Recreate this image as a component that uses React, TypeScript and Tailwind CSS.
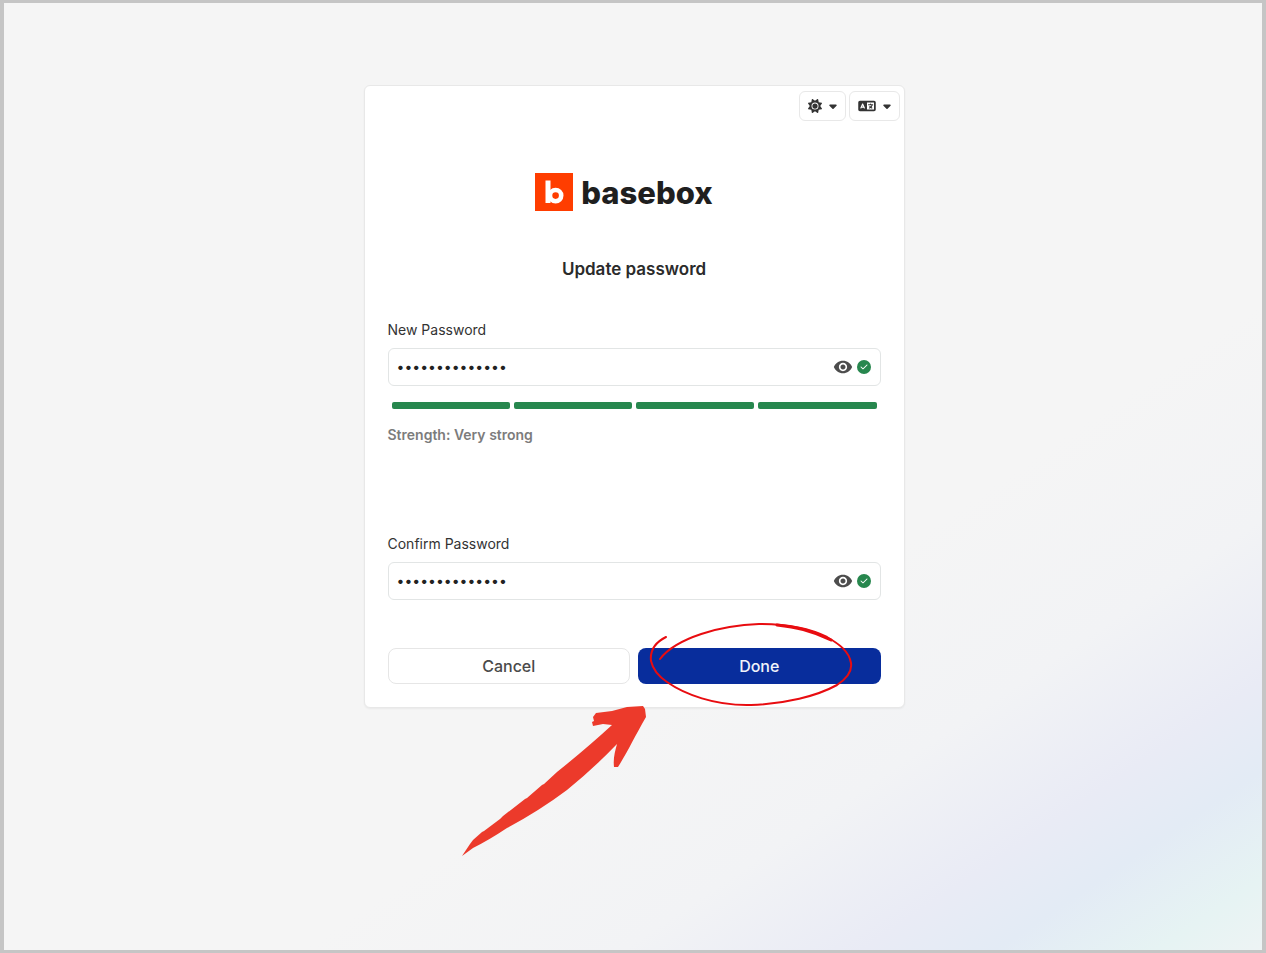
import { useState } from 'react';
import { FaCaretDown, FaCheck, FaLanguage, FaSun } from 'react-icons/fa6';
import { MdVisibility } from 'react-icons/md';

interface PasswordFieldProps {
  id: string;
  label: string;
}

function PasswordField({ id, label }: PasswordFieldProps) {
  const [value, setValue] = useState('correcthorse99');
  const [visible, setVisible] = useState(false);

  return (
    <div>
      <label htmlFor={id} className="block text-sm leading-5 text-[#333]">
        {label}
      </label>
      <div className="mt-2 flex h-[38px] items-center gap-1 rounded-md border border-[#e2e5e5] bg-white pl-2 pr-[9px]">
        <input
          id={id}
          type={visible ? 'text' : 'password'}
          value={value}
          onChange={(e) => setValue(e.target.value)}
          className="min-w-0 flex-1 bg-transparent text-sm text-[#222] outline-none"
        />
        <button
          type="button"
          aria-label="Show password"
          onClick={() => setVisible(!visible)}
          className="text-[#4d4d4d]"
        >
          <MdVisibility className="size-5" />
        </button>
        <span className="flex size-3.5 items-center justify-center rounded-full bg-[#27874e] text-white">
          <FaCheck className="size-2" />
        </span>
      </div>
    </div>
  );
}

function StrengthMeter() {
  return (
    <div>
      <div className="mt-4 grid grid-cols-4 gap-1 px-1">
        {[1, 2, 3, 4].map((step) => (
          <span key={step} className="h-[7px] rounded-xs bg-[#27874e]" />
        ))}
      </div>
      <p className="mt-4 text-sm font-semibold leading-5 text-[#7c7c7c]">
        Strength: Very strong
      </p>
    </div>
  );
}

function Logo() {
  return (
    <div className="flex items-center justify-center gap-2 pr-5">
      <svg viewBox="0 0 38 38" className="size-[38px]" aria-hidden="true">
        <rect width="38" height="38" fill="#ff3d00" />
        <rect x="10.5" y="7.5" width="5" height="22.5" fill="#fff" />
        <circle cx="20.6" cy="22.6" r="5.6" fill="none" stroke="#fff" strokeWidth="4.6" />
      </svg>
      <span className="pt-0.5 text-[31px] font-extrabold leading-[38px] text-[#1f1f1f]">
        basebox
      </span>
    </div>
  );
}

// Hand-drawn marks pointing at the Done button
function Annotations() {
  return (
    <svg
      viewBox="0 0 400 240"
      className="pointer-events-none absolute left-[94px] top-[533px] h-60 w-[400px]"
      aria-hidden="true"
    >
      <g fill="none" stroke="#e80c10" strokeWidth="2" strokeLinecap="round">
        <path d="M207 18C195 24 191 33 192 42C194 51 199 57 208 63C225 75 256 87 292 86C326 85 358 77 378 66C389 59 393 51 392 44C390 32 380 25 368 18C350 9 329 5 300 5C262 6 217 19 201 40" />
        <path d="M318 6C336 8 352 11 372 21" strokeWidth="3" />
      </g>
      <path
        d="M3 237L11 225L14 221L23 213L25 212L41 200L44 197L66 180L68 179L83 166L85 165L98 153Q128 129 153 106L144 105L134 107L133 103L135 102L134 98L137 94L153 92L168 88L184 87L186 90L187 98C176 117 168 134 159 148L155 148C154 140 156 132 158 125Q134 150 108 171Q80 192 48 209Q30 221 14 229Z"
        fill="#ec3a2b"
      />
    </svg>
  );
}

export default function App() {
  return (
    <main className="flex min-h-screen items-start justify-center border-x-4 border-y-3 border-[#c5c5c5] bg-[linear-gradient(146deg,#f5f5f5_0%,#f5f5f5_64%,#f2f3f5_76%,#e9ebf5_85%,#e3ebf5_90%,#e6f3f3_96%,#edf3f4_100%)] pb-10 pl-0.5 pt-[82px] font-[Inter,sans-serif]">
      <section className="relative w-full max-w-[541px] rounded-md border border-[#e8e8e8] bg-white pb-[23px] shadow-xs">
        <div className="flex justify-end gap-[3px] px-1 pt-[5px]">
          <button
            type="button"
            aria-label="Theme"
            className="flex h-[30px] w-[47px] items-center justify-center gap-1 rounded-md border border-[#e8e8e8] pl-[3px] text-[#333]"
          >
            <FaSun className="size-3.5" />
            <FaCaretDown className="h-3 w-3.5" />
          </button>
          <button
            type="button"
            aria-label="Language"
            className="flex h-[30px] w-[51px] items-center justify-center gap-1 rounded-md border border-[#e8e8e8] pl-[3px] text-[#333]"
          >
            <FaLanguage className="h-3.5 w-[18px]" />
            <FaCaretDown className="h-3 w-3.5" />
          </button>
        </div>

        <form className="px-[23px]" onSubmit={(e) => e.preventDefault()}>
          <div className="mt-[51px]">
            <Logo />
          </div>
          <h1 className="mt-[45px] text-center text-[17px] font-semibold leading-6 text-[#2b2b2b]">
            Update password
          </h1>

          <div className="mt-[39px]">
            <PasswordField id="new-password" label="New Password" />
            <StrengthMeter />
          </div>
          <div className="mt-[89px]">
            <PasswordField id="confirm-password" label="Confirm Password" />
          </div>

          <div className="mt-12 grid grid-cols-2 gap-2">
            <button
              type="button"
              className="h-9 rounded-lg border border-[#e6e6e6] bg-white text-base font-medium text-[#4a4a4a]"
            >
              Cancel
            </button>
            <button
              type="submit"
              className="h-9 rounded-lg bg-[#082d9c] text-base font-medium text-[#f0f2fa]"
            >
              Done
            </button>
          </div>
        </form>
        <Annotations />
      </section>
    </main>
  );
}
